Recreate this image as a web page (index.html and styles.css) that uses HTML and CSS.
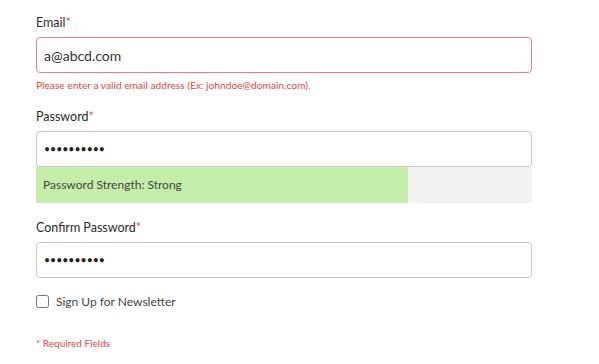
FILE: index.html
```html
<!DOCTYPE html>
<html>
<head>
    <meta charset="UTF-8">
    <title>Sign Up</title>
    <link rel="stylesheet" href="styles.css">
</head>
<body>
    <form class="signup">
        <div class="field">
            <label class="label" for="email">Email<span class="req">*</span></label>
            <input id="email" class="input input-error" type="text" value="a@abcd.com">
            <div class="error">Please enter a valid email address (Ex: johndoe@domain.com).</div>
        </div>

        <div class="field">
            <label class="label" for="password">Password<span class="req">*</span></label>
            <input id="password" class="input input-secret" type="password" value="abcdefghij">
            <div class="strength">
                <div class="strength-fill" style="width: 75%">Password Strength: Strong</div>
            </div>
        </div>

        <div class="field">
            <label class="label" for="confirm">Confirm Password<span class="req">*</span></label>
            <input id="confirm" class="input input-secret" type="password" value="abcdefghij">
        </div>

        <label class="check">
            <input type="checkbox" class="check-box">
            <span>Sign Up for Newsletter</span>
        </label>

        <div class="required">* Required Fields</div>
    </form>
</body>
</html>
```

FILE: styles.css
```css
body {
    margin: 0;
    font-family: Lato, "Noto Sans", sans-serif;
    color: #333;
    background: #fff;
}
.signup {
    width: 496px;
    padding: 14px 0 0 36px;
}
.field {
    display: flex;
    flex-direction: column;
    margin-bottom: 16px;
}
.label {
    font-size: 12.5px;
    line-height: 18px;
    color: #2b2b2b;
    margin-bottom: 5px;
}
.req {
    color: #e4514b;
}
.input {
    box-sizing: border-box;
    height: 36px;
    margin: 0;
    padding: 0 7px;
    border: 1px solid #c9c9c9;
    border-radius: 4px;
    font-family: inherit;
    font-size: 14px;
    color: #333;
    outline: none;
}
.input-secret {
    font-size: 10.5px;
    color: #222;
}
.input-error {
    border-color: #ef7f7f;
}
.error {
    margin-top: 5px;
    font-size: 10.2px;
    line-height: 14px;
    color: #e5473f;
}
.strength {
    background: #f2f2f2;
    height: 36px;
}
.strength-fill {
    box-sizing: border-box;
    height: 100%;
    background: #c5edaa;
    padding: 0 7px;
    font-size: 12px;
    line-height: 36px;
    color: #444;
    white-space: nowrap;
}
.check {
    display: flex;
    align-items: center;
    gap: 7px;
    margin-top: 15px;
    font-size: 12px;
    color: #444;
}
.check-box {
    width: 13px;
    height: 13px;
    margin: 0;
}
.required {
    margin-top: 28px;
    font-size: 10px;
    color: #e5473f;
}
```
